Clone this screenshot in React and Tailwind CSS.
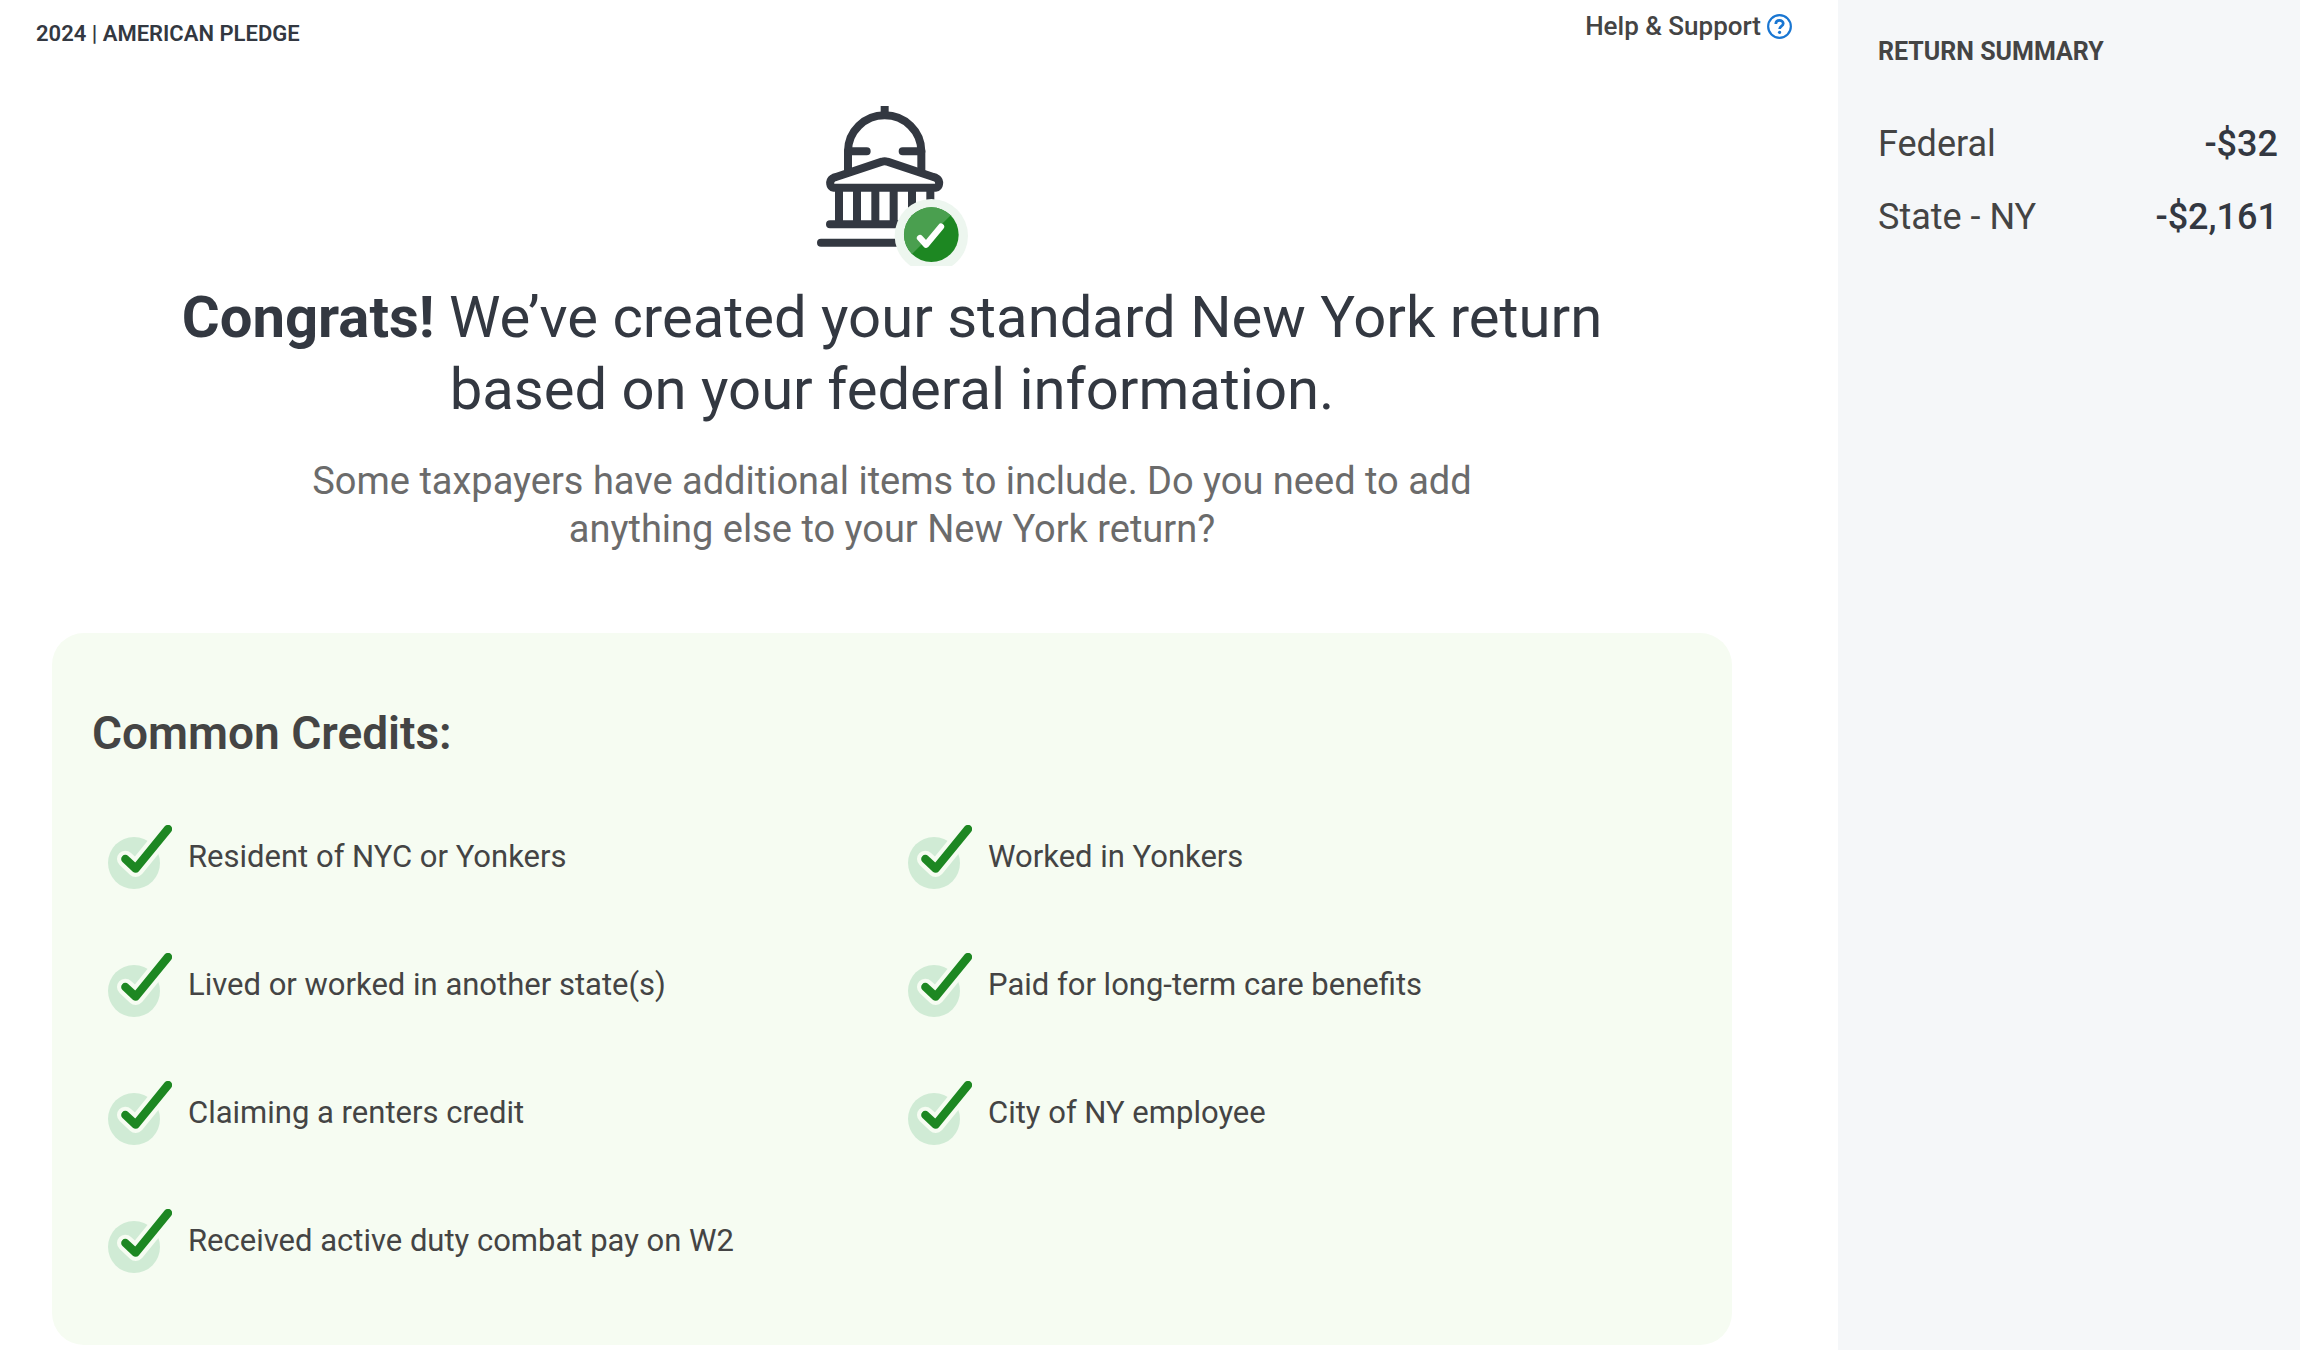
const credits = [
  { id: 1, label: "Resident of NYC or Yonkers" },
  { id: 2, label: "Worked in Yonkers" },
  { id: 3, label: "Lived or worked in another state(s)" },
  { id: 4, label: "Paid for long-term care benefits" },
  { id: 5, label: "Claiming a renters credit" },
  { id: 6, label: "City of NY employee" },
  { id: 7, label: "Received active duty combat pay on W2" },
];

const totals = [
  { id: 1, label: "Federal", amount: "-$32" },
  { id: 2, label: "State - NY", amount: "-$2,161" },
];

function CapitolIcon({ className }) {
  return (
    <svg viewBox="111 48 453 480" className={className} aria-hidden="true">
      <g fill="none" stroke="#333841" strokeWidth="24">
        <path d="M314 48v22" />
        <path d="M204 246v-62a110 108 0 0 1 220 0v62" />
        <path d="M204 184h56M424 184h-56" strokeLinecap="round" />
        <path
          d="M160 293h308c10 0 14-20 2-28q-4-3-10-4L322 215q-8-3-16 0L168 261q-6 1-10 4c-12 8-8 28 2 28z"
          strokeLinejoin="round"
        />
        <path d="M177 300v104M231 300v104M286 300v104M341 300v104M396 300v104M451 300v104" />
        <path d="M150 403h230M123 458h250" strokeLinecap="round" />
      </g>
      <circle cx="454" cy="437" r="110" fill="#edf6ef" />
      <circle cx="454" cy="434" r="82" fill="#1d8722" />
      <path d="M396 492A82 82 0 0 1 512 376z" fill="#4a9f4f" />
      <path
        d="M420 444l18 20 45-54"
        fill="none"
        stroke="#fff"
        strokeWidth="19"
        strokeLinecap="round"
        strokeLinejoin="round"
      />
    </svg>
  );
}

function CheckIcon({ className }) {
  return (
    <svg viewBox="84 78 192 192" className={className} aria-hidden="true">
      <circle cx="162" cy="192" r="78" fill="#d0ebd5" />
      <g fill="none" strokeLinecap="round" strokeLinejoin="round">
        <path d="M136 180l31 29 97-119" stroke="#f6fcf2" strokeWidth="50" />
        <path d="M136 180l31 29 97-119" stroke="#1d8722" strokeWidth="25" />
      </g>
    </svg>
  );
}

function HelpIcon({ className }) {
  return (
    <svg viewBox="0 0 24 24" className={className} aria-hidden="true">
      <circle cx="12" cy="12" r="10.9" fill="none" stroke="#1976d2" strokeWidth="2.1" />
      <path
        d="M8.4 9.6C8.5 7.4 10 6.2 12 6.2s3.6 1.2 3.6 3c0 2.5-3.5 2.5-3.5 5.2"
        fill="none"
        stroke="#1976d2"
        strokeWidth="2.6"
      />
      <circle cx="12.1" cy="17.6" r="1.6" fill="#1976d2" />
    </svg>
  );
}

function Header() {
  return (
    <header className="flex items-start justify-between pr-[46px] pl-9">
      <p className="pt-[18px] text-[22px] leading-8 font-semibold text-[#333841]">
        2024 | AMERICAN PLEDGE
      </p>
      <a
        href="#help"
        className="flex items-center gap-1.5 pt-2.5 text-[26px] leading-8 font-medium text-[#444]"
      >
        Help &amp; Support
        <HelpIcon className="size-[25px]" />
      </a>
    </header>
  );
}

function Credits() {
  return (
    <section className="rounded-[32px] bg-[#f6fcf2] pt-[72px] pr-6 pb-[72px] pl-10">
      <h2 className="text-[46px] leading-[56px] font-semibold text-[#444]">
        Common Credits:
      </h2>
      <ul className="grid grid-cols-2 gap-y-16 pt-16 pl-4">
        {credits.map((credit) => (
          <li key={credit.id} className="flex items-center gap-4">
            <CheckIcon className="size-16 shrink-0" />
            <span className="text-[31px] leading-10 text-[#444]">{credit.label}</span>
          </li>
        ))}
      </ul>
    </section>
  );
}

function Summary() {
  return (
    <aside className="w-1/5 min-w-[462px] bg-[#f5f7f9] pt-9 pr-[22px] pl-10">
      <h2 className="text-[25px] leading-8 font-bold text-[#444]">RETURN SUMMARY</h2>
      <dl className="pt-10">
        {totals.map((total) => (
          <div key={total.id} className="flex justify-between text-[36px] leading-[73px]">
            <dt className="text-[#444]">{total.label}</dt>
            <dd className="font-medium text-[#333841]">{total.amount}</dd>
          </div>
        ))}
      </dl>
    </aside>
  );
}

function App() {
  return (
    <div className="flex min-h-screen bg-white font-['Roboto',sans-serif]">
      <main className="flex-1">
        <Header />
        <div className="pt-14 pr-[106px] pl-[52px]">
          <div className="flex flex-col items-center pb-20 text-center">
            <CapitolIcon className="h-40 w-[151px]" />
            <h1 className="max-w-[1480px] pt-[15px] text-[58px] leading-[72px] text-[#333841]">
              <strong className="font-bold">Congrats!</strong> We’ve created your standard New
              York return based on your federal information.
            </h1>
            <p className="max-w-[1200px] pt-8 text-[38px] leading-[48px] text-[#6b6b6b]">
              Some taxpayers have additional items to include. Do you need to add anything else
              to your New York return?
            </p>
          </div>
          <Credits />
        </div>
      </main>
      <Summary />
    </div>
  );
}

export default App;
